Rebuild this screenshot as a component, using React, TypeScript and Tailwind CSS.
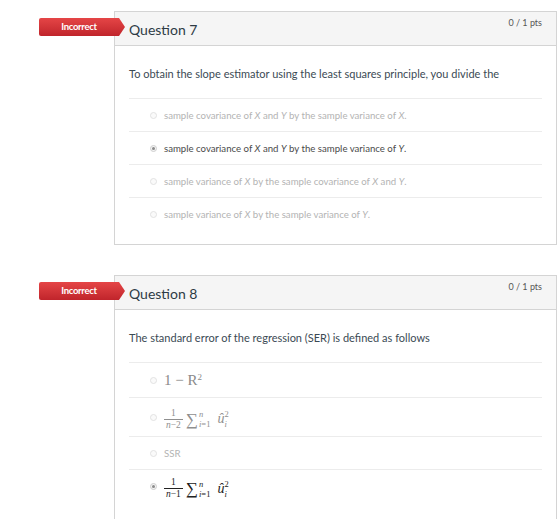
import React from "react";

function Badge() {
  return (
    <div className="absolute left-[-76px] top-[6px] flex h-[18px] w-[86px] items-center justify-center rounded-l-[2px] bg-gradient-to-b from-[#e54546] to-[#c0242b] pr-[6px] text-[9.5px] font-bold tracking-[-0.3px] text-white [clip-path:polygon(0_0,calc(100%-6px)_0,100%_50%,calc(100%-6px)_100%,0_100%)]">
      Incorrect
    </div>
  );
}

function Radio({ checked }: { checked?: boolean }) {
  return (
    <span
      className={
        "flex h-[7px] w-[7px] shrink-0 items-center justify-center rounded-full border " +
        (checked ? "border-[#cfcfcf] bg-[#f4f4f4]" : "border-[#e2e2e2] bg-[#fafafa]")
      }
    >
      {checked && <span className="h-[3px] w-[3px] rounded-full bg-[#8a8a8a]" />}
    </span>
  );
}

function Option({
  checked,
  h = "h-[33px]",
  children,
}: {
  checked?: boolean;
  h?: string;
  children: React.ReactNode;
}) {
  return (
    <div className={"flex items-center gap-[7px] border-t border-[#ececec] pl-[21px] " + h}>
      <Radio checked={checked} />
      <div
        className={
          "text-[9.65px] leading-[14px] " + (checked ? "text-[#4a4a4a]" : "text-[#b3b3b3]")
        }
      >
        {children}
      </div>
    </div>
  );
}

function Card({
  title,
  prompt,
  last,
  children,
}: {
  title: string;
  prompt: string;
  last?: boolean;
  children: React.ReactNode;
}) {
  return (
    <div className={"relative border border-[#d4d4d4] bg-white " + (last ? "border-b-0" : "")}>
      <Badge />
      <div className="flex h-[34px] justify-between border-b border-[#d4d4d4] bg-[#f5f5f5] px-[14px]">
        <div className="pt-[8px] text-[14px] leading-[20px] text-[#2d3b45]">{title}</div>
        <div className="pt-[5px] text-[9px] leading-[12px] text-[#555]">0 / 1 pts</div>
      </div>
      <div className={"px-[14px] pt-[21px] " + (last ? "pb-[20px]" : "pb-[14px]")}>
        <div className="text-[11px] leading-[14px] text-[#3b4a54]">{prompt}</div>
        <div className="mt-[17px]">{children}</div>
      </div>
    </div>
  );
}

function Frac({ den }: { den: React.ReactNode }) {
  return (
    <span className="mr-[3px] inline-flex flex-col items-center text-[9.5px] leading-[9px]">
      <span className="px-[1px] pb-[1px]">1</span>
      <span className="border-t border-current px-[2px] pt-[1px]">{den}</span>
    </span>
  );
}

function SumU({ minus }: { minus: string }) {
  return (
    <span className="inline-flex items-center">
      <Frac
        den={
          <>
            <i>n</i>−{minus}
          </>
        }
      />
      <span className="text-[17px] leading-none">∑</span>
      <span className="ml-[1px] inline-flex flex-col text-[8.5px] leading-[10px]">
        <i>n</i>
        <span>
          <i>i</i>=1
        </span>
      </span>
      <span className="ml-[7px] text-[14px] italic leading-none">û</span>
      <span className="inline-flex flex-col text-[8.5px] leading-[10px]">
        <span>2</span>
        <i>i</i>
      </span>
    </span>
  );
}

export default function App() {
  return (
    <div className="min-h-[519px] overflow-hidden bg-white pl-[114px] pr-[3px] pt-[11px] font-['Lato',sans-serif]">
      <Card
        title="Question 7"
        prompt="To obtain the slope estimator using the least squares principle, you divide the"
      >
        <Option>
          sample covariance of <i>X</i> and <i>Y</i> by the sample variance of <i>X</i>.
        </Option>
        <Option checked>
          sample covariance of <i>X</i> and <i>Y</i> by the sample variance of <i>Y</i>.
        </Option>
        <Option>
          sample variance of <i>X</i> by the sample covariance of <i>X</i> and <i>Y</i>.
        </Option>
        <Option>
          sample variance of <i>X</i> by the sample variance of <i>Y</i>.
        </Option>
      </Card>
      <div className="h-[30px]" />
      <Card
        last
        title="Question 8"
        prompt="The standard error of the regression (SER) is defined as follows"
      >
        <Option h="h-[35px]">
          <span className="font-['Liberation_Serif',serif] text-[15px] text-[#8a8a8a]">
            1 − R<sup className="text-[9px]">2</sup>
          </span>
        </Option>
        <Option h="h-[39px]">
          <span className="font-['Liberation_Serif',serif] text-[#8f8f8f]">
            <SumU minus="2" />
          </span>
        </Option>
        <Option>SSR</Option>
        <Option checked h="h-[34px]">
          <span className="font-['Liberation_Serif',serif] text-[#222]">
            <SumU minus="1" />
          </span>
        </Option>
      </Card>
    </div>
  );
}
